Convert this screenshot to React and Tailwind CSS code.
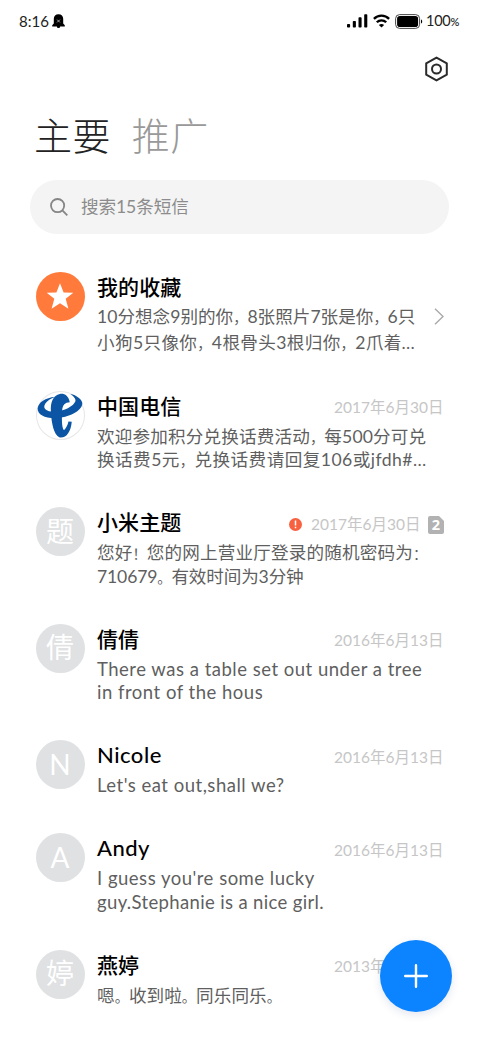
import React from 'react'

const threads = [
  {
    id: 'favorites',
    name: '我的收藏',
    avatar: 'star',
    lines: [
      { text: '10分想念9别的你，8张照片7张是你，6只', tracking: 'tracking-[0px]' },
      { text: '小狗5只像你，4根骨头3根归你，2爪着…', tracking: 'tracking-[0.35px]' },
    ],
    link: true,
  },
  {
    id: 'telecom',
    name: '中国电信',
    avatar: 'telecom',
    date: '2017年6月30日',
    lines: [
      { text: '欢迎参加积分兑换话费活动，每500分可兑', tracking: 'tracking-[0.15px]' },
      { text: '换话费5元，兑换话费请回复106或jfdh#…', tracking: 'tracking-[0.45px]' },
    ],
  },
  {
    id: 'themes',
    name: '小米主题',
    avatar: '题',
    date: '2017年6月30日',
    lines: [
      { text: '您好！您的网上营业厅登录的随机密码为：', tracking: 'tracking-[0.15px]' },
      { text: '710679。有效时间为3分钟', tracking: 'tracking-[-0.15px]' },
    ],
    failed: true,
    sim: 2,
  },
  {
    id: 'qianqian',
    name: '倩倩',
    avatar: '倩',
    date: '2016年6月13日',
    lines: [
      { text: 'There was a table set out under a tree', tracking: 'tracking-[0.5px]' },
      { text: 'in front of the hous', tracking: 'tracking-[0.5px]' },
    ],
    latin: true,
  },
  {
    id: 'nicole',
    name: 'Nicole',
    avatar: 'N',
    date: '2016年6月13日',
    lines: [{ text: "Let's eat out,shall we?", tracking: 'tracking-[0.5px]' }],
    latin: true,
  },
  {
    id: 'andy',
    name: 'Andy',
    avatar: 'A',
    date: '2016年6月13日',
    lines: [
      { text: "I guess you're some lucky", tracking: 'tracking-[0.5px]' },
      { text: 'guy.Stephanie is a nice girl.', tracking: 'tracking-[0.35px]' },
    ],
    latin: true,
  },
  {
    id: 'yanting',
    name: '燕婷',
    avatar: '婷',
    date: '2013年6月13日',
    lines: [{ text: '嗯。收到啦。同乐同乐。', tracking: 'tracking-[0.05px]' }],
  },
]

const StatusBar = () => (
  <div className="flex h-[42px] items-center justify-between pl-[19px] pr-[21px] text-[15px] text-[#222]">
    <div className="flex items-center gap-[3px]">
      <span>8:16</span>
      <svg width="13" height="15" viewBox="0 0 13 15">
        <path
          d="M6.5 0.3C3.6 0.3 1.8 2.2 1.8 4.8V9.6L0.2 11.2V12.4H12.8V11.2L11.2 9.6V4.8C11.2 2.2 9.4 0.3 6.5 0.3ZM4.8 12.2a1.7 1.9 0 0 0 3.4 0Z"
          fill="#000"
        />
        <path d="M5.1 5.6l2.8 2.8M7.9 5.6l-2.8 2.8" stroke="#ccc" strokeWidth="0.8" />
      </svg>
    </div>
    <div className="flex items-center">
      <svg width="21" height="14" viewBox="0 0 21 14" fill="#000">
        <rect x="0" y="10" width="3.1" height="3.6" rx="0.8" />
        <rect x="5.8" y="7" width="3.1" height="6.6" rx="0.8" />
        <rect x="11.5" y="3.3" width="3.1" height="10.3" rx="0.8" />
        <rect x="17.2" y="0.2" width="3.1" height="13.4" rx="0.8" />
      </svg>
      <svg className="ml-[5px]" width="17" height="14" viewBox="0 0 17 14" fill="none" stroke="#000">
        <path d="M0.9 4.9C5 0.6 12 0.6 16.1 4.9" strokeWidth="2.3" />
        <path d="M3.8 8.3C6.4 5.6 10.6 5.6 13.2 8.3" strokeWidth="2.3" />
        <path d="M8.5 13.6L5.9 10.9C7.4 9.6 9.6 9.6 11.1 10.9Z" fill="#000" stroke="none" />
      </svg>
      <svg className="ml-[5px]" width="28" height="15" viewBox="0 0 28 15">
        <rect x="0.6" y="0.6" width="24" height="13.8" rx="4" fill="none" stroke="#333" strokeWidth="0.9" />
        <rect x="2.1" y="2" width="21" height="11" rx="2.8" fill="#000" />
        <path d="M26 5.5c1.6 0.4 1.6 3.6 0 4Z" fill="#000" />
      </svg>
      <span className="ml-[3px] text-[14.5px] tracking-[-0.3px]">
        100<span className="text-[11px] font-medium">%</span>
      </span>
    </div>
  </div>
)

const TelecomLogo = () => (
  <svg className="size-full" viewBox="0 0 148 148" fill="#0b55a4">
    <path d="M58 17C28 20 7 34 5 52C4 72 28 83 60 82C98 80 138 62 140 38C140 26 122 12 104 9C114 16 121 24 119 31C114 46 84 61 58 63C40 63 24 58 25 46C27 34 40 24 58 17Z" />
    <path d="M102 34C98 14 86 7 72 9C52 13 43 34 45 62C47 100 54 130 70 140C90 144 105 126 108 93L98 92C95 106 88 116 84 118C77 110 78 80 79 60C80 42 88 34 102 34Z" />
  </svg>
)

const Avatar = ({ kind }) => {
  if (kind === 'star') {
    return (
      <div className="flex size-[49px] shrink-0 items-center justify-center rounded-full bg-[#ff7a3b]">
        <svg width="28" height="27" viewBox="0 0 28 27" fill="#fff">
          <path d="M14 0.3L17.6 9.4L27.3 9.8L19.7 15.8L22.4 25.8L14 20.3L5.6 25.8L8.3 15.8L0.7 9.8L10.4 9.4Z" />
        </svg>
      </div>
    )
  }
  if (kind === 'telecom') {
    return (
      <div className="size-[49px] shrink-0 rounded-full shadow-[inset_0_0_0_1px_#e6e6e6]">
        <TelecomLogo />
      </div>
    )
  }
  return (
    <div className="flex size-[49px] shrink-0 items-center justify-center rounded-full bg-[#dfe1e3] pb-[2px] text-[28px] leading-none text-white">
      {kind}
    </div>
  )
}

const SimBadge = ({ slot }) => (
  <svg width="16" height="18" viewBox="0 0 16 18">
    <path d="M2 0H11L16 5V16a2 2 0 0 1-2 2H2a2 2 0 0 1-2-2V2a2 2 0 0 1 2-2Z" fill="#b2b2b2" />
    <text
      className="font-['Open_Sans',sans-serif]"
      x="8"
      y="14.2"
      textAnchor="middle"
      fontSize="14.5"
      fontWeight="700"
      fill="#fff"
    >
      {slot}
    </text>
  </svg>
)

const FailedIcon = () => (
  <svg className="mr-[2px]" width="13" height="13" viewBox="0 0 13 13">
    <circle cx="6.5" cy="6.5" r="6.5" fill="#f8613f" />
    <path d="M6.5 2.6V7.6M6.5 8.8V10.3" stroke="#fff" strokeWidth="1.5" />
  </svg>
)

// Full-width punctuation is set smaller so it sits tighter than the ideographs
const Line = ({ text, tracking }) => (
  <p className={`whitespace-nowrap ${tracking}`}>
    {text.split(/([，。！：])/).map((part, i) =>
      /^[，。！：]$/.test(part) ? (
        <span key={i} className="text-[14.2px] leading-none">
          {part}
        </span>
      ) : (
        part
      )
    )}
  </p>
)

const Thread = ({ thread }) => (
  <li
    className={`flex pl-[35.5px] pr-[36.5px] ${
      thread.link ? 'h-[118.5px]' : thread.lines.length > 1 ? 'h-[116.5px]' : 'h-[93px]'
    }`}
  >
    <Avatar kind={thread.avatar} />
    <div className="ml-[12.5px] min-w-0 flex-1">
      <div className="flex h-[31px] items-center justify-between">
        <h2
          className={`font-medium leading-none text-black ${
            /^[A-Z]/.test(thread.name) ? 'pb-[1px] text-[22px] tracking-[0.5px]' : 'pb-[2px] text-[21px] tracking-[0.1px]'
          }`}
        >
          {thread.name}
        </h2>
        {thread.date && (
          <div className="flex items-center gap-[7px] pt-[4px]">
            {thread.failed && <FailedIcon />}
            <span className="whitespace-nowrap text-[15.5px] leading-none text-[#c6c6c6]">{thread.date}</span>
            {thread.sim && <SimBadge slot={thread.sim} />}
          </div>
        )}
      </div>
      <div className={`flex items-center justify-between ${thread.link ? 'pt-[1px]' : 'pt-[3px]'}`}>
        <div
          className={`text-[#5f5f5f] ${thread.latin ? 'text-[18.5px]' : 'text-[17.6px]'} ${
            thread.link ? 'leading-[26px]' : 'leading-[23.5px]'
          }`}
        >
          {thread.lines.map((line) => (
            <Line key={line.text} text={line.text} tracking={line.tracking} />
          ))}
        </div>
        {thread.link && (
          <svg className="mb-[28px] shrink-0" width="10" height="17" viewBox="0 0 10 17" fill="none">
            <path d="M1 0.8L9 8.5L1 16.2" stroke="#aaa" strokeWidth="1.4" />
          </svg>
        )}
      </div>
    </div>
  </li>
)

const App = () => (
  <div
    lang="zh-CN"
    className="relative h-[1040px] w-[480px] overflow-hidden bg-white font-['Lato','Noto_Sans_CJK_SC',sans-serif]"
  >
    <StatusBar />

    <div className="flex h-[54px] items-center justify-end pr-[31px]">
      <svg width="25" height="26" viewBox="0 0 25 26" fill="none" stroke="#2b2b2b" strokeWidth="2">
        <path d="M12.5 1.6L22.8 7.3V18.7L12.5 24.4L2.2 18.7V7.3Z" strokeLinejoin="round" />
        <circle cx="12.5" cy="13" r="4.5" />
      </svg>
    </div>

    <div className="flex h-[84px] items-center gap-[21px] pl-[34px] pb-[6px] text-[38px] font-light leading-none tracking-[0.4px]">
      <h1 className="text-[#222]">主要</h1>
      <span className="text-[#999]">推广</span>
    </div>

    <div className="ml-[30px] mr-[31px] flex h-[54px] items-center gap-[13px] rounded-full bg-[#f4f4f4] pl-[20px] text-[17.6px] text-[#8c8c8c]">
      <svg width="18" height="18" viewBox="0 0 18 18" fill="none" stroke="#858585" strokeWidth="1.8">
        <circle cx="7.6" cy="7.6" r="6.6" />
        <path d="M12.4 12.4L17.3 17.3" />
      </svg>
      <span className="tracking-[-0.1px]">搜索15条短信</span>
    </div>

    <ul className="pt-[38px]">
      {threads.map((thread) => (
        <Thread key={thread.id} thread={thread} />
      ))}
    </ul>

    {/* New message button */}
    <button className="absolute bottom-[28px] right-[28px] flex size-[72px] items-center justify-center rounded-full bg-[#0d84ff] shadow-[0_3px_8px_rgba(13,60,120,0.12)]">
      <svg width="24" height="24" viewBox="0 0 24 24" stroke="#fff" strokeWidth="2.4" strokeLinecap="round">
        <path d="M12 1.2V22.8M1.2 12H22.8" />
      </svg>
    </button>
  </div>
)

export default App
